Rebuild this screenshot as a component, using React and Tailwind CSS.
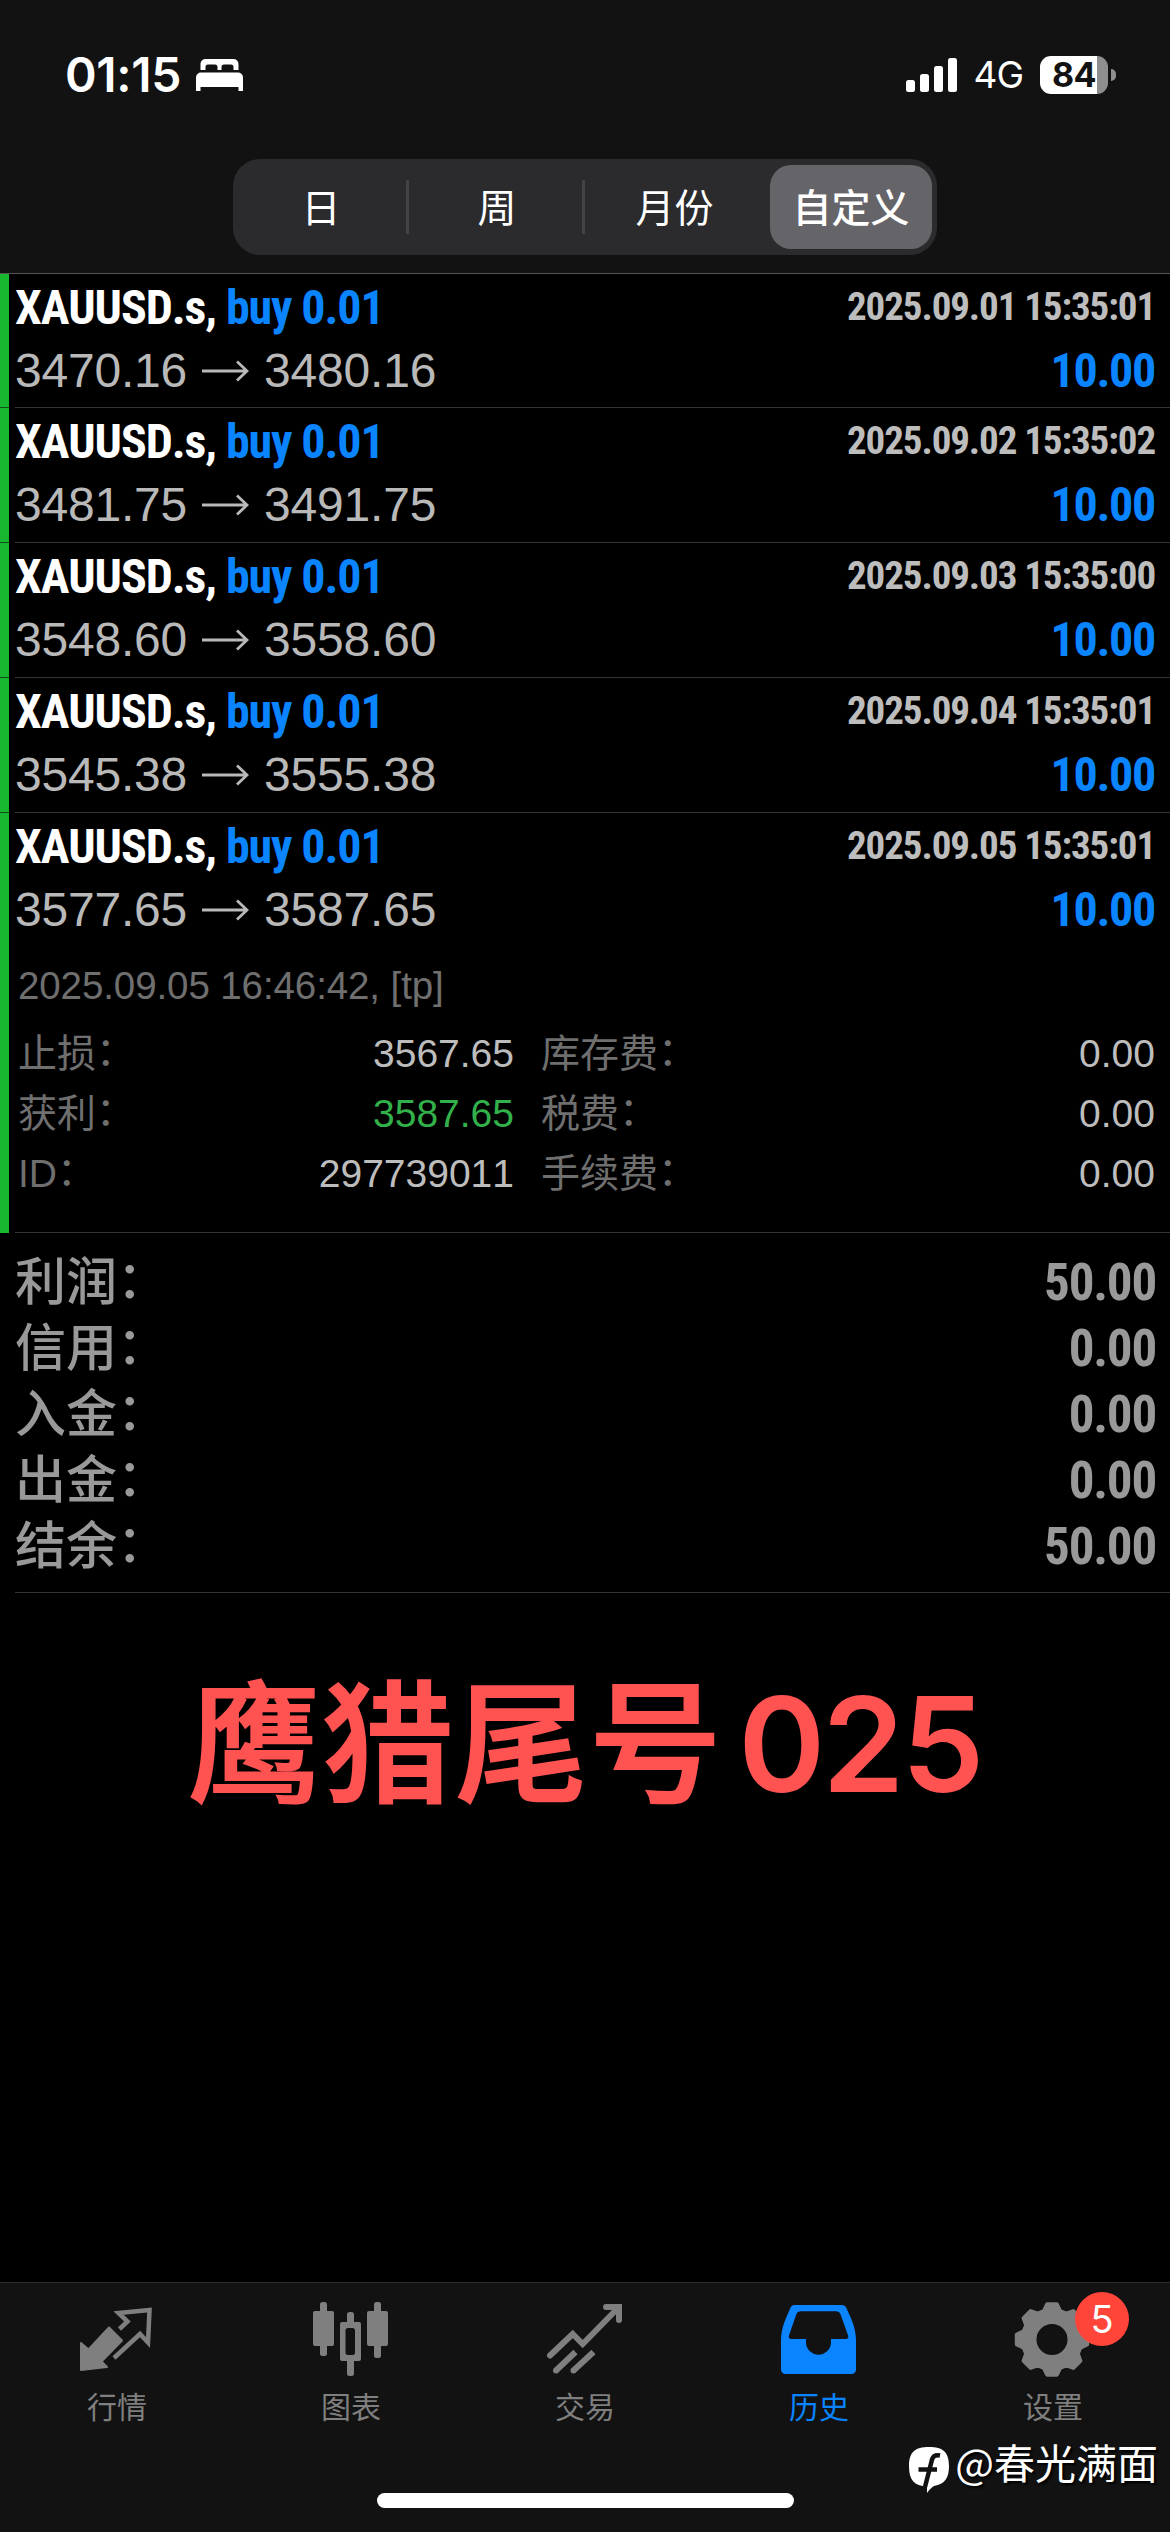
import clsx from "clsx";

const periods = ["日", "周", "月份", "自定义"];

const trades = [
  { open: "3470.16", close: "3480.16", time: "2025.09.01 15:35:01" },
  { open: "3481.75", close: "3491.75", time: "2025.09.02 15:35:02" },
  { open: "3548.60", close: "3558.60", time: "2025.09.03 15:35:00" },
  { open: "3545.38", close: "3555.38", time: "2025.09.04 15:35:01" },
  { open: "3577.65", close: "3587.65", time: "2025.09.05 15:35:01", expanded: true },
];

const details = [
  { label: "止损", value: "3567.65", fee: "库存费", amount: "0.00" },
  { label: "获利", value: "3587.65", fee: "税费", amount: "0.00", hit: true },
  { label: "ID", value: "297739011", fee: "手续费", amount: "0.00" },
];

const summary = [
  { label: "利润", value: "50.00" },
  { label: "信用", value: "0.00" },
  { label: "入金", value: "0.00" },
  { label: "出金", value: "0.00" },
  { label: "结余", value: "50.00" },
];

const tabs = [
  { label: "行情", icon: QuotesIcon },
  { label: "图表", icon: ChartIcon },
  { label: "交易", icon: TradeIcon },
  { label: "历史", icon: HistoryIcon, active: true },
  { label: "设置", icon: GearIcon, badge: 5 },
];

function BedIcon() {
  return (
    <svg width="47" height="32" viewBox="0 0 47 32" fill="white">
      <path d="M4.5 11V5a5 5 0 0 1 5-5h28a5 5 0 0 1 5 5v6h-5V8a2.5 2.5 0 0 0-2.5-2.5h-7A2.5 2.5 0 0 0 25.5 8v3h-4V8A2.5 2.5 0 0 0 19 5.5h-7A2.5 2.5 0 0 0 9.5 8v3z" />
      <path d="M0 32V18.5a5 5 0 0 1 5-5h37a5 5 0 0 1 5 5V32h-4.5v-4H4.5v4z" />
    </svg>
  );
}

function SignalIcon() {
  return (
    <svg width="52" height="34" viewBox="0 0 52 34" fill="white">
      <rect x="0" y="22" width="9" height="12" rx="2.5" />
      <rect x="14" y="16" width="9" height="18" rx="2.5" />
      <rect x="28" y="8" width="9" height="26" rx="2.5" />
      <rect x="42" y="0" width="9" height="34" rx="2.5" />
    </svg>
  );
}

function ArrowIcon() {
  return (
    <svg width="47" height="22" viewBox="0 0 47 22" fill="none" stroke="currentColor" strokeWidth="2.8">
      <path d="M0 11h45M35 1.5l10 9.5-10 9.5" />
    </svg>
  );
}

function QuotesIcon() {
  return (
    <svg width="100" height="84" viewBox="0 0 100 84">
      <path
        d="M14 47l7.5 6.5L42 31.5 55 44.5 34.5 65.5l5.5 5.5L14 74z"
        fill="currentColor"
        stroke="currentColor"
        strokeWidth="2"
        strokeLinejoin="round"
      />
      <path
        d="M52.5 33L60.5 25.5 51.5 17l31-3-1.5 32.5-8-8.5L47 62"
        fill="none"
        stroke="currentColor"
        strokeWidth="4.5"
      />
    </svg>
  );
}

function ChartIcon() {
  return (
    <svg width="100" height="84" viewBox="0 0 100 84" fill="currentColor">
      <rect x="12" y="15" width="21" height="35" rx="2" />
      <rect x="19" y="6" width="7" height="54" rx="2.5" />
      <path
        fillRule="evenodd"
        d="M41 26h17a2 2 0 0 1 2 2v35a2 2 0 0 1-2 2H41a2 2 0 0 1-2-2V28a2 2 0 0 1 2-2zm6 6a2.5 2.5 0 0 0-2.5 2.5v22A2.5 2.5 0 0 0 47 59h4.5a2.5 2.5 0 0 0 2.5-2.5v-22A2.5 2.5 0 0 0 51.5 32z"
      />
      <rect x="46" y="16" width="7" height="14" rx="2.5" />
      <rect x="46" y="62" width="7" height="18" rx="2.5" />
      <rect x="66" y="15" width="21" height="35" rx="2" />
      <rect x="73" y="6" width="7" height="56" rx="2.5" />
    </svg>
  );
}

function TradeIcon() {
  return (
    <svg width="100" height="84" viewBox="0 0 100 84" fill="none" stroke="currentColor" strokeWidth="6">
      <path strokeLinecap="round" d="M15 59.5L37.7 38l10 10L83 12" />
      <path strokeLinecap="round" d="M71 11h13v13" />
      <path d="M21 74.5L40.5 56M38.5 74.5L58.5 56" />
      <g fill="currentColor" stroke="none">
        <circle cx="21" cy="74.5" r="3" />
        <circle cx="38.5" cy="74.5" r="3" />
      </g>
    </svg>
  );
}

function HistoryIcon() {
  return (
    <svg width="100" height="84" viewBox="0 0 100 84" fill="currentColor">
      <path
        fillRule="evenodd"
        d="M26 9h46.5c2.5 0 4 1 5 3.2C82 22 87 32 87 44v29.5a4.5 4.5 0 0 1-4.5 4.5h-66a4.5 4.5 0 0 1-4.5-4.5V44c0-12 5-22 9.2-31.8C22.2 10 23.5 9 26 9zm6 6.3c-2.5 0-3.7.8-4.7 3L20 39.5c-.8 2.3.2 3.5 2.3 3.5H37v3.2a12.5 12.5 0 0 0 25 0V43h14.8c2.1 0 3.1-1.2 2.3-3.5L71.5 18.3c-1-2.2-2.2-3-4.7-3z"
      />
    </svg>
  );
}

// eight teeth around a disc, two corners at the tip and two at the root of each
const gearPoints = Array.from({ length: 8 }, (_, i) => i * 45)
  .flatMap((deg) => [
    [deg - 16, 29.5],
    [deg - 8, 35.5],
    [deg + 8, 35.5],
    [deg + 16, 29.5],
  ])
  .map(([deg, r]) => {
    const a = (deg * Math.PI) / 180;
    return `${(49 + r * Math.sin(a)).toFixed(1)} ${(43.5 - r * Math.cos(a)).toFixed(1)}`;
  })
  .join("L");

function GearIcon() {
  return (
    <svg width="100" height="84" viewBox="0 0 100 84" fill="currentColor">
      <path
        fillRule="evenodd"
        stroke="currentColor"
        strokeWidth="4"
        strokeLinejoin="round"
        d={`M${gearPoints}ZM49 26a17.5 17.5 0 1 0 0 35a17.5 17.5 0 1 0 0-35z`}
      />
    </svg>
  );
}

function StatusBar() {
  return (
    <div className="flex h-[159px] items-start justify-between pt-[47px] pr-[54px] pl-[65px] font-['Inter',sans-serif] text-white">
      <div className="flex h-14 items-center gap-[15px]">
        <span className="text-[48px] font-semibold tracking-[-0.3px]">01:15</span>
        <BedIcon />
      </div>
      <div className="flex h-[55px] items-center">
        <SignalIcon />
        <span className="ml-[15px] text-[37px] tracking-[-1px]">4G</span>
        <div className="ml-[17px] flex h-[38px] w-[68px] items-center justify-center rounded-[11px] bg-linear-to-r from-white from-84% to-[#8e8e8e] to-84% text-[34px] font-bold tracking-[-0.5px] text-[#121212]">
          84
        </div>
        <div className="ml-[3px] h-3 w-[5px] rounded-r-full bg-[#8e8e8e]" />
      </div>
    </div>
  );
}

function PeriodSwitch() {
  return (
    <div className="mx-auto flex h-24 w-[704px] items-center rounded-[27px] bg-[#2b2b2e] font-['Noto_Sans_CJK_SC',sans-serif] text-[39px] text-white">
      {periods.map((period, i) => (
        <button
          key={period}
          type="button"
          className={clsx(
            "flex items-center justify-center pb-1",
            i === 3 ? "mr-[5px] ml-auto h-[84px] w-[162px] rounded-[21px] bg-[#656469] font-medium" : "h-[54px] w-44 pl-[3px]",
            i < 2 && "border-r-[3px] border-[#434346]"
          )}
        >
          {period}
        </button>
      ))}
    </div>
  );
}

function Label({ children }) {
  return (
    <span className="font-['Liberation_Sans','Noto_Sans_CJK_SC',sans-serif]">
      {children}
      <span className="inline-block -translate-y-0.5">：</span>
    </span>
  );
}

function TradeRow({ trade, first }) {
  return (
    <div className={clsx("flex", trade.expanded ? "h-[420px]" : first ? "h-[134px]" : "h-[135px]")}>
      <div className={clsx("w-[9px] bg-[#17b730]", !trade.expanded && "border-b border-[#0d4d17]")} />
      <div className="ml-1.5 flex-1 border-b border-[#333] pt-0.5 pr-[15px] font-['Liberation_Sans','Noto_Sans_CJK_SC',sans-serif] [font-kerning:none]">
        <div className="flex justify-between font-['Roboto_Condensed','Roboto',sans-serif] font-bold">
          <span className="text-[48px] leading-[63px] tracking-[-1.1px] text-white">
            XAUUSD.s, <span className="text-[#0a84ff]">buy 0.01</span>
          </span>
          <span className="text-[39px] leading-[62px] tracking-[-1.1px] text-[#bdbdbd]">{trade.time}</span>
        </div>
        <div className="flex h-[63px] justify-between text-[48px] leading-[63px] tracking-[-0.2px]">
          <span className="flex items-center gap-[15px] text-[#b9b9b9]">
            {trade.open}
            <ArrowIcon />
            {trade.close}
          </span>
          <span className="font-['Roboto_Condensed','Roboto',sans-serif] font-bold tracking-[-1.3px] text-[#0a84ff]">
            10.00
          </span>
        </div>
        {trade.expanded && <TradeDetails />}
      </div>
    </div>
  );
}

function TradeDetails() {
  return (
    <div className="pt-[15px] pl-[3px] text-[39px] leading-[60px] text-[#6f6f6f]">
      <p className="mb-2 text-[38.5px] tracking-[-0.1px]">2025.09.05 16:46:42, [tp]</p>
      {details.map((row) => (
        <div key={row.label} className="flex h-[60px]">
          <div className="flex w-[496px] justify-between">
            <Label>{row.label}</Label>
            <span className={row.hit ? "text-[#32b14a]" : "text-[#bdbdbd]"}>{row.value}</span>
          </div>
          <div className="ml-[27px] flex flex-1 justify-between">
            <Label>{row.fee}</Label>
            <span className="text-[#bdbdbd]">{row.amount}</span>
          </div>
        </div>
      ))}
    </div>
  );
}

function Summary() {
  return (
    <div className="ml-[15px] border-b border-[#333] pt-[17px] pr-3.5 pb-3 text-[51px] leading-[66px] text-[#999]">
      {summary.map((row) => (
        <div key={row.label} className="flex h-[66px] justify-between font-medium">
          <Label>{row.label}</Label>
          <span className="font-['Roboto_Condensed','Roboto',sans-serif] font-bold tracking-[-1.2px]">{row.value}</span>
        </div>
      ))}
    </div>
  );
}

function Watermark() {
  return (
    <div className="absolute top-[164px] right-3 flex items-start gap-[6px] text-white">
      <svg width="40" height="46" viewBox="0 0 40 46">
        <path fill="white" d="M20 0C34 0 40 5 40 19c0 12-4 18-15 20-2 1-4 3-7 7v-6.5C5 39 0 33 0 19 0 5 6 0 20 0z" />
        <path d="M31 8.5c-5-1-7.500.5-8.500 6L16 40M9.5 22.500h18.500" fill="none" stroke="#121212" strokeWidth="4.5" />
      </svg>
      <span className="-mt-[9px] font-['Noto_Sans_CJK_SC',sans-serif] text-[41px] leading-[46px] [text-shadow:2px_2px_2px_#000]">
        @春光满面
      </span>
    </div>
  );
}

function TabBar() {
  return (
    <nav className="relative flex h-[250px] border-t border-[#2c2c2c] bg-[#121212] pt-[13px]">
      {tabs.map(({ label, icon: Icon, active, badge }) => (
        <div
          key={label}
          className={clsx("relative flex w-[234px] flex-col items-center", active ? "text-[#0a84ff]" : "text-[#7f7f7f]")}
        >
          <Icon />
          <span className="mt-1 font-['Noto_Sans_CJK_SC',sans-serif] text-[30px] leading-[42px]">{label}</span>
          {badge && (
            <span className="absolute -top-1 left-[139px] flex size-[54px] items-center justify-center rounded-full bg-[#ff453a] font-['Inter',sans-serif] text-[38px] text-white">
              {badge}
            </span>
          )}
        </div>
      ))}
      <div className="absolute bottom-6 left-[377px] h-[15px] w-[417px] rounded-full bg-white" />
      <Watermark />
    </nav>
  );
}

export default function App() {
  return (
    <div className="flex h-[2532px] w-[1170px] flex-col overflow-hidden bg-black">
      <header className="h-[274px] shrink-0 border-b border-[#555] bg-[#121212]">
        <StatusBar />
        <PeriodSwitch />
      </header>
      <main className="flex-1">
        {trades.map((trade, i) => (
          <TradeRow key={trade.time} trade={trade} first={i === 0} />
        ))}
        <Summary />
        <div className="mt-[85px] flex pl-[188px] text-[132px] leading-[132px] text-[#ff5352]">
          <span className="font-['Inter','Noto_Sans_CJK_SC',sans-serif] font-medium tracking-[1.8px] [-webkit-text-stroke:2px]">
            鹰猎尾号
          </span>
          <span className="ml-[15px] font-['Inter',sans-serif] font-semibold tracking-[-3px]">025</span>
        </div>
      </main>
      <TabBar />
    </div>
  );
}
